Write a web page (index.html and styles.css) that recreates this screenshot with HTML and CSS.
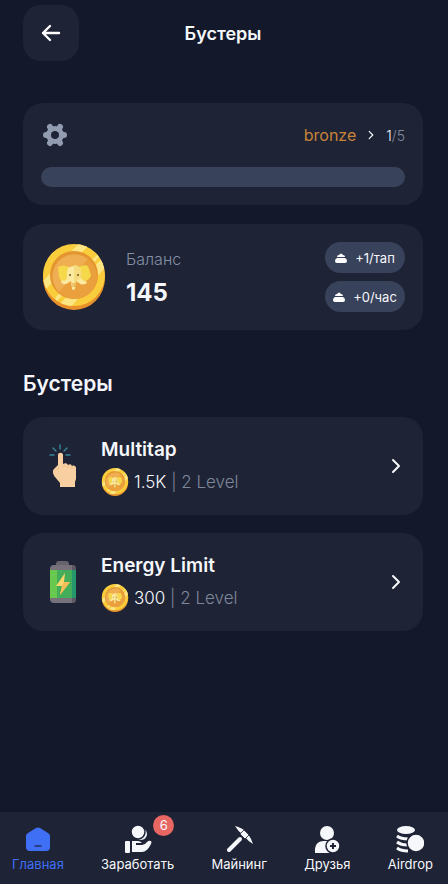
FILE: index.html
```html
<!DOCTYPE html>
<html lang="ru">
<head>
  <meta charset="UTF-8">
  <meta name="viewport" content="width=device-width, initial-scale=1.0">
  <title>Бустеры</title>
  <link rel="stylesheet" href="styles.css">
</head>
<body>
  <svg class="sprite" aria-hidden="true">
    <symbol id="coin" viewBox="0 0 64 66">
      <clipPath id="coin-face"><circle cx="32" cy="31" r="31"/></clipPath>
      <ellipse cx="32" cy="34" rx="31" ry="32" fill="#e8912c"/>
      <circle cx="32" cy="31" r="31" fill="#facd3c"/>
      <g clip-path="url(#coin-face)" fill="#fce583">
        <path d="M-2 40 40-4 50-2 1 48zM18 60 60 14 66 20 28 64zM13 54 56 10 58 12 15 57z"/>
      </g>
      <circle cx="32" cy="31" r="24" fill="#e5952f"/>
      <circle cx="33" cy="33" r="22" fill="#eaa03c"/>
      <path d="M17 48A22 22 0 0 1 46 15z" fill="#efae52"/>
      <path d="M27 23q-6-3-11 0l1 9q1 5 4 6l5-4zM37 23q5-3 9-1l3 9q-2 6-7 6l-4-3z" fill="#f6d94a"/>
      <path d="M26 24q6-4 12 0 2 5 1 10 3 4 5 3l1 2q-5 3-8 0l-3-2-1 8q-1 2-3 0l-1-8-3 2q-5 3-7-1l1-2q3 2 5-2-1-5 1-10z" fill="#fbe9a0"/>
      <path d="M32 21q4 0 6 3 2 5 1 10l-5 3-1 8h-1z" fill="#f5db7d"/>
      <path d="M30 40h4M30 42h4" stroke="#dca238" stroke-width="1"/>
      <circle cx="28" cy="31" r="1" fill="#765021"/>
      <circle cx="36" cy="31" r="1" fill="#765021"/>
    </symbol>
    <symbol id="chevron" viewBox="0 0 10 16">
      <path d="M2 2 8 8 2 14" fill="none" stroke="currentColor" stroke-width="2" stroke-linecap="round" stroke-linejoin="round"/>
    </symbol>
    <symbol id="tap" viewBox="0 0 12 10">
      <path d="M2 4q0-2 2-2 2-3 4 0 2 0 2 2z"/>
      <path d="M2 5h8q2 1 2 3 0 2-2 2H2q-2 0-2-2 0-2 2-3z"/>
    </symbol>
  </svg>

  <main class="page">
    <header class="header">
      <button type="button" class="btn-back" aria-label="Назад">
        <svg width="20" height="18" viewBox="0 0 20 18"><path d="M18 9H2M9 2 2 9l7 7" fill="none" stroke="#fff" stroke-width="2.4" stroke-linecap="round" stroke-linejoin="round"/></svg>
      </button>
      <h1>Бустеры</h1>
    </header>

    <section class="card rank">
      <div class="rank-row">
        <button type="button" class="btn-settings" aria-label="Настройки">
          <svg width="24" height="24" viewBox="0 0 24 24">
            <g fill="none" stroke="#929cb1" stroke-width="6" stroke-linecap="round">
              <path d="M3 12h1M20 12h1M7 4l1 2M16 18l1 2M17 4l-1 2M8 18l-1 2"/>
              <circle cx="12" cy="12" r="6.5" stroke-width="5"/>
            </g>
          </svg>
        </button>
        <a href="#" class="rank-link">
          <span class="rank-name">bronze</span>
          <svg class="rank-arrow"><use href="#chevron"/></svg>
          <span class="rank-level"><span class="light">1</span>/5</span>
        </a>
      </div>
      <div class="progress"></div>
    </section>

    <section class="card balance">
      <svg class="coin-big"><use href="#coin"/></svg>
      <div class="balance-info">
        <div class="balance-label">Баланс</div>
        <div class="balance-value">145</div>
      </div>
      <div class="rates">
        <div class="rate"><svg><use href="#tap"/></svg>+1/тап</div>
        <div class="rate"><svg><use href="#tap"/></svg>+0/час</div>
      </div>
    </section>

    <h2>Бустеры</h2>

    <div class="boosters">
      <a href="#" class="card booster">
        <svg class="booster-icon" viewBox="0 0 28 46">
          <path d="M11 2v4M4 5l3 3M18 5l-3 3M1 12h4M17 12h4" fill="none" stroke="#348a9b" stroke-width="1.4" stroke-linecap="round"/>
          <path d="M9 12c0-3 5-3 5 0v9c2-1 4-1 5 1 2-1 3-1 4 1 2-1 4 0 4 2v11l-1 3v5H11v-4l-5-6c-2-3-3-6-1-8l4-4z" fill="#f8cfa0"/>
          <path d="M9 24v4M15 21v3M19 22v3M23 23v3" stroke="#e4b583" stroke-width=".6"/>
        </svg>
        <div class="booster-info">
          <div class="booster-name">Multitap</div>
          <div class="booster-price"><svg class="coin-small"><use href="#coin"/></svg><span><span class="light">1.5K</span> | 2 Level</span></div>
        </div>
        <svg class="booster-arrow"><use href="#chevron"/></svg>
      </a>
      <a href="#" class="card booster">
        <svg class="booster-icon" viewBox="0 0 28 46">
          <rect x="7" y="2" width="13" height="8" rx="3" fill="#67636d"/>
          <rect x="1" y="6" width="26" height="38" rx="4" fill="#77717c"/>
          <path d="M1 11h26v28H1z" fill="#43ad59"/>
          <path d="M1 11h7v28H1z" fill="#69c94e"/>
          <path d="M23 11h4v28h-4z" fill="#26976a"/>
          <path d="M23 6c3 0 4 2 4 5h-4zM23 39h4c0 3-1 5-4 5z" fill="#5c5763"/>
          <path d="m16 14-9 13h6l-2 9 10-13h-6z" fill="#fad66c"/>
          <path d="m15 23-2 4-2 9 10-13z" fill="#f5bd56"/>
        </svg>
        <div class="booster-info">
          <div class="booster-name">Energy Limit</div>
          <div class="booster-price"><svg class="coin-small"><use href="#coin"/></svg><span><span class="light">300</span> | 2 Level</span></div>
        </div>
        <svg class="booster-arrow"><use href="#chevron"/></svg>
      </a>
    </div>
  </main>

  <nav class="nav">
    <a href="#" class="nav-item active">
      <svg viewBox="0 0 28 28"><path d="M12 3q2-1 4 0l8 5q2 1 2 3v11q0 4-4 4H6q-4 0-4-4V11q0-2 2-3z"/><path d="M11 21h6" stroke="#20305f" stroke-width="1.5" stroke-linecap="round"/></svg>
      Главная
    </a>
    <a href="#" class="nav-item">
      <svg viewBox="0 0 28 28">
        <circle cx="17" cy="9" r="6"/>
        <circle cx="14" cy="7" r="7" stroke="#1e2335" stroke-width="1.5"/>
        <rect x="1" y="16" width="5" height="12" rx="1"/>
        <path d="M8 16h6q2 0 4 2h-6v2h6q3 0 5-3 2-2 4-1 1 1 0 3-4 8-9 8H8z"/>
      </svg>
      Заработать
      <span class="badge">6</span>
    </a>
    <a href="#" class="nav-item">
      <svg viewBox="0 0 28 28">
        <path d="M10 1q7 2 10 5l3 3q3 4 5 10-5-3-8-7l-3-3Q13 6 10 1z"/>
        <path d="m19 5 5 5-4 4-5-5z" stroke="#1e2335" stroke-width=".8"/>
        <path d="M15 14 4 25" stroke="currentColor" stroke-width="4" stroke-linecap="round"/>
      </svg>
      Майнинг
    </a>
    <a href="#" class="nav-item">
      <svg viewBox="0 0 28 28">
        <circle cx="14" cy="8" r="7"/>
        <path d="M2 28q-1-12 9-12h6l4 12z"/>
        <circle cx="20" cy="21" r="7" stroke="#1e2335" stroke-width="1.5"/>
        <path d="M20 18v6M17 21h6" stroke="#1e2335" stroke-width="2"/>
      </svg>
      Друзья
    </a>
    <a href="#" class="nav-item">
      <svg viewBox="0 0 28 28">
        <ellipse cx="10" cy="5" rx="9" ry="4"/>
        <path d="M1 11q4 3 11 3M1 17q4 3 10 3M1 23q4 3 11 3" fill="none" stroke="currentColor" stroke-width="3"/>
        <circle cx="20" cy="18" r="9" stroke="#1e2335" stroke-width="1.5"/>
      </svg>
      Airdrop
    </a>
  </nav>
</body>
</html>
```
FILE: styles.css
```css
* {
  box-sizing: border-box;
}

body {
  margin: 0;
  min-height: 100vh;
  display: flex;
  flex-direction: column;
  font-family: Inter, "Open Sans", sans-serif;
  color: #f5f7fb;
  background-color: #13182a;
}

a {
  color: inherit;
  text-decoration: none;
}

button {
  padding: 0;
  border: none;
  background: none;
  cursor: pointer;
}

svg {
  display: block;
  flex-shrink: 0;
}

.sprite {
  position: absolute;
  width: 0;
  height: 0;
}

.page {
  flex: 1;
  padding: 5px 25px 20px 23px;
}

.header {
  display: grid;
  grid-template-columns: 56px 1fr 56px;
  align-items: center;
  margin-bottom: 42px;
}

.btn-back {
  display: flex;
  align-items: center;
  justify-content: center;
  height: 56px;
  border-radius: 18px;
  background-color: #1e2335;
}

h1 {
  margin: 0;
  font-size: 18px;
  font-weight: 600;
  text-align: center;
}

.card {
  border-radius: 20px;
  background-color: #1e2335;
}

.rank {
  padding: 18px;
  margin-bottom: 19px;
}

.rank-row {
  display: flex;
  align-items: center;
  justify-content: space-between;
  height: 28px;
  padding-left: 2px;
  margin-bottom: 18px;
}

.rank-link {
  display: flex;
  align-items: center;
  gap: 12px;
}

.rank-name {
  font-size: 16px;
  color: #c98339;
}

.rank-arrow {
  width: 6px;
  height: 10px;
}

.rank-level {
  font-size: 14px;
  font-weight: 300;
  color: #828b9f;
}

.light {
  color: #f5f7fb;
}

.progress {
  height: 20px;
  border-radius: 10px;
  background-color: #38425a;
}

.balance {
  display: flex;
  align-items: center;
  padding: 18px;
  margin-bottom: 40px;
}

.coin-big {
  width: 66px;
  height: 66px;
}

.balance-info {
  flex: 1;
  padding-left: 19px;
}

.balance-label {
  margin-bottom: 8px;
  font-size: 16px;
  font-weight: 300;
  line-height: 24px;
  color: #8390a5;
}

.balance-value {
  font-size: 24px;
  font-weight: 700;
  line-height: 28px;
}

.rates {
  display: flex;
  flex-direction: column;
  gap: 8px;
}

.rate {
  display: flex;
  align-items: center;
  justify-content: center;
  gap: 8px;
  width: 80px;
  height: 31px;
  border-radius: 16px;
  font-size: 13px;
  background-color: #38425a;
}

.rate svg {
  width: 12px;
  height: 10px;
  fill: #fff;
}

h2 {
  margin: 0 0 19px;
  font-size: 21px;
  font-weight: 600;
  line-height: 28px;
}

.boosters {
  display: flex;
  flex-direction: column;
  gap: 18px;
}

.booster {
  display: flex;
  align-items: center;
  height: 98px;
  padding: 0 22px 0 26px;
}

.booster-icon {
  width: 28px;
  height: 46px;
}

.booster-info {
  flex: 1;
  padding-left: 24px;
}

.booster-name {
  margin-bottom: 4px;
  font-size: 19px;
  font-weight: 600;
  line-height: 28px;
}

.booster-price {
  display: flex;
  align-items: center;
  gap: 5px;
  font-size: 17px;
  font-weight: 300;
  line-height: 28px;
  color: #7f879b;
}

.coin-small {
  width: 28px;
  height: 28px;
}

.booster-arrow {
  width: 10px;
  height: 16px;
}

.nav {
  display: flex;
  justify-content: space-between;
  height: 72px;
  padding: 13px 15px 0 12px;
  background-color: #1e2335;
}

.nav-item {
  position: relative;
  display: flex;
  flex-direction: column;
  align-items: center;
  gap: 3px;
  font-size: 13px;
  line-height: 16px;
}

.nav-item svg {
  width: 28px;
  height: 28px;
  fill: currentColor;
}

.active {
  color: #3f6ff5;
}

.badge {
  position: absolute;
  top: -10px;
  right: 0;
  width: 21px;
  height: 21px;
  border-radius: 50%;
  font-size: 13px;
  line-height: 21px;
  text-align: center;
  background-color: #e86763;
}
```
